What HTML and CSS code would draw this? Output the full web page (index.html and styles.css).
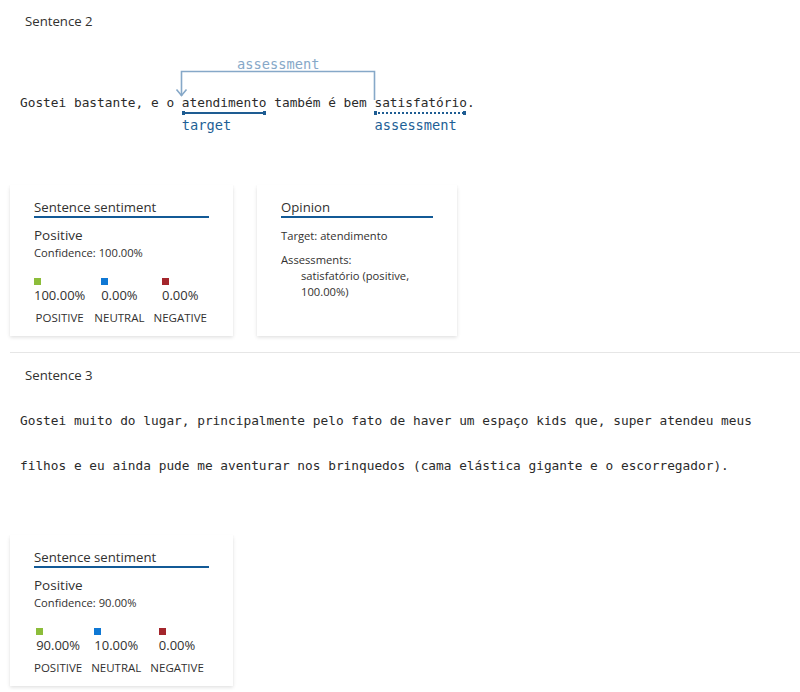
FILE: index.html
```html
<!DOCTYPE html>
<html>
<head>
<meta charset="utf-8">
<link rel="stylesheet" href="styles.css">
</head>
<body>
<div class="page">
  <section class="sentence">
    <div class="sent-title">Sentence 2</div>
    <div class="sent-text annotated">Gostei bastante, e o <span class="ann target">atendimento<span class="ann-label">target</span></span> também é bem <span class="ann assess">satisfatório<span class="ann-label">assessment</span></span>.<svg class="arrow" width="220" height="40" viewBox="0 0 220 40"><path d="M200.5 29 V0.5 H7.5 V25" fill="none" stroke="#86a8c8" stroke-width="1.6"/><path d="M2.5 18.5 L7.5 24.5 L12.5 18.5" fill="none" stroke="#86a8c8" stroke-width="1.6"/></svg><span class="rel-label">assessment</span></div>
    <div class="cards">
      <div class="card">
        <div class="card-title">Sentence sentiment</div>
        <div class="sent-label">Positive</div>
        <div class="confidence">Confidence: 100.00%</div>
        <div class="scores">
          <div class="score"><div class="score-val"><span class="sq pos"></span>100.00%</div><div class="score-name">POSITIVE</div></div>
          <div class="score"><div class="score-val"><span class="sq neu"></span>0.00%</div><div class="score-name">NEUTRAL</div></div>
          <div class="score"><div class="score-val"><span class="sq neg"></span>0.00%</div><div class="score-name">NEGATIVE</div></div>
        </div>
      </div>
      <div class="card opinion">
        <div class="card-title">Opinion</div>
        <div class="op-target">Target: atendimento</div>
        <div class="op-assess">Assessments:</div>
        <div class="op-list">satisfatório (positive, 100.00%)</div>
      </div>
    </div>
  </section>
  <div class="divider"></div>
  <section class="sentence s3">
    <div class="sent-title">Sentence 3</div>
    <div class="sent-text">Gostei muito do lugar, principalmente pelo fato de haver um espaço kids que, super atendeu meus filhos e eu ainda pude me aventurar nos brinquedos (cama elástica gigante e o escorregador).</div>
    <div class="cards">
      <div class="card">
        <div class="card-title">Sentence sentiment</div>
        <div class="sent-label">Positive</div>
        <div class="confidence">Confidence: 90.00%</div>
        <div class="scores">
          <div class="score"><div class="score-val"><span class="sq pos"></span>90.00%</div><div class="score-name">POSITIVE</div></div>
          <div class="score"><div class="score-val"><span class="sq neu"></span>10.00%</div><div class="score-name">NEUTRAL</div></div>
          <div class="score"><div class="score-val"><span class="sq neg"></span>0.00%</div><div class="score-name">NEGATIVE</div></div>
        </div>
      </div>
    </div>
  </section>
</div>
</body>
</html>
```

FILE: styles.css
```css
* { box-sizing: border-box; }
html, body { margin: 0; padding: 0; background: #fff; }
body {
  font-family: "Open Sans", "Noto Sans", sans-serif;
  color: #323130;
  width: 800px;
  height: 692px;
  overflow: hidden;
}
.page { padding: 12px 0 0 10px; }
.sent-title {
  font-size: 13.2px;
  line-height: 18px;
  padding-left: 15px;
  color: #323130;
}
.sent-text {
  font-family: "DejaVu Sans Mono", "Liberation Mono", monospace;
  font-size: 12.8px;
  line-height: 45px;
  padding-left: 10px;
  width: 780px;
  color: #2b2b2b;
  margin-top: 50px;
}
.annotated { position: relative; height: 45px; }
.ann { position: relative; display: inline-block; line-height: 45px; }
.ann::before {
  content: "";
  position: absolute;
  left: 0;
  right: 1px;
  top: 31px;
  height: 4px;
}
.target::before {
  background:
    linear-gradient(#1e5c92, #1e5c92) left center / 3px 4px no-repeat,
    linear-gradient(#1e5c92, #1e5c92) right center / 3px 4px no-repeat,
    linear-gradient(#1e5c92, #1e5c92) center / 100% 2px no-repeat;
}
.assess::before {
  background:
    linear-gradient(#1e5c92, #1e5c92) left center / 3px 4px no-repeat,
    linear-gradient(#1e5c92, #1e5c92) right center / 3px 4px no-repeat,
    repeating-linear-gradient(90deg, #1e5c92 0 2px, transparent 2px 4px) center / 100% 2px no-repeat;
}
.ann-label {
  position: absolute;
  left: 0;
  top: 36px;
  font-size: 13.7px;
  line-height: 18px;
  color: #1e5f96;
  white-space: nowrap;
}
.arrow {
  position: absolute;
  left: 163.5px;
  top: -9px;
  overflow: visible;
}
.rel-label {
  position: absolute;
  left: 227px;
  top: -25px;
  font-size: 13.7px;
  line-height: 18px;
  color: #86a8c8;
}
.cards {
  display: flex;
  gap: 24px;
  align-items: stretch;
  margin-top: 60px;
}
.card {
  width: 223px;
  padding: 13px 24px 10px;
  background: #fff;
  box-shadow: 0 1.6px 3.6px rgba(0,0,0,0.13), 0 0.3px 0.9px rgba(0,0,0,0.11);
}
.card.opinion { width: 200px; }
.card-title {
  font-size: 13.2px;
  line-height: 18px;
  border-bottom: 2px solid #135a96;
  color: #323130;
}
.sent-label {
  font-size: 13.5px;
  line-height: 20px;
  margin-top: 7px;
}
.confidence {
  font-size: 11.2px;
  line-height: 16px;
}
.scores {
  display: flex;
  gap: 9px;
  margin-top: 17px;
}
.score {
  display: flex;
  flex-direction: column;
  align-items: center;
}
.score-val {
  font-size: 13px;
  line-height: 18px;
}
.sq {
  display: block;
  width: 7px;
  height: 7px;
  margin-bottom: 1px;
}
.sq.pos { background: #8cbd3a; }
.sq.neu { background: #0f78d4; }
.sq.neg { background: #a4262c; }
.score-name {
  font-size: 11.5px;
  line-height: 16px;
  margin-top: 6px;
}
.op-target {
  font-size: 11.2px;
  line-height: 16px;
  margin-top: 10px;
}
.op-assess {
  font-size: 11.2px;
  line-height: 16px;
  margin-top: 8px;
}
.op-list {
  font-size: 11.2px;
  line-height: 16px;
  padding-left: 20px;
}
.divider {
  height: 1px;
  background: #e6e6e6;
  margin-top: 16px;
}
.s3 { padding-top: 13px; }
.s3 .sent-text { margin-top: 13.5px; }
.s3 .cards { margin-top: 47.5px; }
```
